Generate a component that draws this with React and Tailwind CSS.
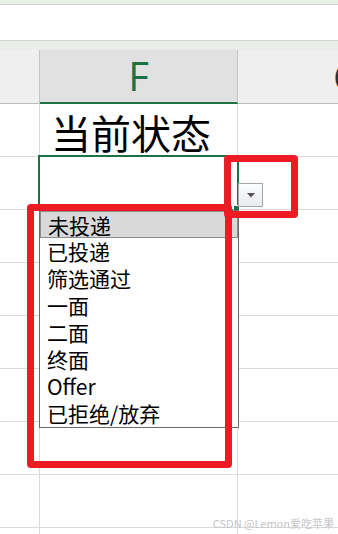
import React from "react";

const items = ["未投递", "已投递", "筛选通过", "一面", "二面", "终面", "Offer", "已拒绝/放弃"];

function Row({ children }) {
  return (
    <div className="flex h-[53px] border-b border-[#dadada]">
      <div className="w-[40px] border-r border-[#dadada]" />
      <div className="w-[198px] border-r border-[#dadada] flex items-center">{children}</div>
      <div className="flex-1" />
    </div>
  );
}

export default function App() {
  return (
    <div
      className="relative w-[338px] h-[534px] overflow-hidden bg-white"
      style={{ fontFamily: '"Noto Sans CJK SC", "Noto Sans", sans-serif' }}
    >
      <div className="h-[5px] bg-[#e9eee9] border-b border-[#d2d2d2]" />
      <div className="h-[35px] bg-white" />
      <div className="h-[10px] bg-[#e9eee9] border-t border-[#d5d5d5]" />
      {/* header */}
      <div className="flex h-[54px]">
        <div className="w-[40px] bg-[#efefef] border-r border-[#c4c4c4] border-b border-b-[#bdbdbd]" />
        <div className="w-[198px] bg-[#e1e1e1] border-r border-[#c4c4c4] border-b-2 border-b-[#1e7145] flex items-center justify-center">
          <span className="text-[40px] leading-none text-[#1e7145]" style={{ fontFamily: '"Open Sans", "Liberation Sans", sans-serif' }}>F</span>
        </div>
        <div className="flex-1 bg-[#efefef] border-b border-b-[#bdbdbd] flex items-center justify-end overflow-hidden">
          <span className="text-[40px] leading-none text-[#333] mr-[-24px]" style={{ fontFamily: '"Open Sans", "Liberation Sans", sans-serif' }}>G</span>
        </div>
      </div>
      <Row>
        <span className="pl-[11px] pt-[4px] text-[40px] leading-none text-black">当前状态</span>
      </Row>
      <Row />
      <Row />
      <Row />
      <Row />
      <Row />
      <Row />
      <Row />
      <Row />

      {/* active cell */}
      <div className="absolute left-[38px] top-[155px] w-[201px] h-[56px] border-2 border-[#1e7145]" />
      <div className="absolute left-[233px] top-[205px] w-[7px] h-[7px] bg-[#1e7145] border border-white" />

      {/* dropdown button */}
      <div className="absolute left-[238px] top-[183px] w-[25px] h-[24px] border border-[#a3a7ab] bg-gradient-to-b from-[#fbfcfd] to-[#e9ebef] flex items-center justify-center">
        <svg width="8" height="5" viewBox="0 0 8 5">
          <path d="M0 0 L8 0 L4 4.5 Z" fill="#555" />
        </svg>
      </div>

      {/* list */}
      <div className="absolute left-[39px] top-[210px] w-[200px] h-[218px] border border-[#6b6b6b] bg-white">
        {items.map((t, i) => (
          <div
            key={t}
            className={
              "h-[27px] leading-[27px] pl-[7px] text-[21px] text-black whitespace-nowrap " +
              (i === 0 ? "bg-[#d9d9d9] border border-[#8c8c8c] pl-[6px] leading-[25px]" : "")
            }
          >
            {t}
          </div>
        ))}
      </div>

      {/* red annotations */}
      <div className="absolute left-[224px] top-[155px] w-[74px] h-[63px] border-[7px] border-[#ed1c24] rounded-[4px]" />
      <div className="absolute left-[27px] top-[204px] w-[205px] h-[264px] border-[7px] border-[#ed1c24] rounded-[4px]" />

      {/* watermark */}
      <div className="absolute right-[4px] top-[516px] text-[11px] leading-[14px] text-[#c6c6c6] whitespace-nowrap">
        CSDN @Lemon爱吃苹果
      </div>
    </div>
  );
}
